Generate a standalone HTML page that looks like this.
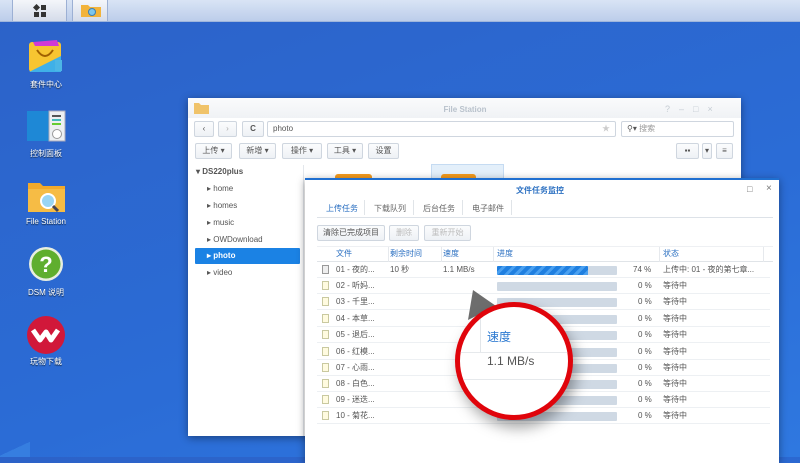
<!DOCTYPE html>
<html><head><meta charset="utf-8"><style>
*{margin:0;padding:0;box-sizing:border-box}
body{width:800px;height:457px;overflow:hidden;position:relative;font-family:"Liberation Sans","Noto Sans CJK SC",sans-serif;background:linear-gradient(160deg,#2c62c8 0%,#2b6cd6 60%,#2f78e0 100%);font-size:8px;color:#444}
.a{position:absolute}
.tb{left:0;top:0;width:800px;height:22px;background:linear-gradient(#d9e4f5,#bccdea);border-bottom:1px solid #9fb6dc}
.btn{position:absolute;top:0;height:21px;background:linear-gradient(#f4f6fa,#d5dcea);border-right:1px solid #9cb0d4;border-left:1px solid #9cb0d4}
.lbl{color:#fff;font-size:8px;text-align:center;width:80px;text-shadow:0 1px 1px #123}
.win{background:#fff;box-shadow:0 2px 8px rgba(0,0,0,.4)}
.b{position:absolute;border:1px solid #cfd6df;background:linear-gradient(#fbfcfd,#eef1f5);border-radius:2px;height:16px;font-size:8px;color:#555;line-height:14px;text-align:center}
.tree{position:absolute;left:207px;font-size:8px;color:#555}
.row{position:absolute;left:317px;width:453px;height:16px;border-bottom:1px solid #edf0f3;font-size:8px;color:#555;line-height:15px}
.row span{position:absolute}
.bar{position:absolute;left:180px;top:4px;width:120px;height:9px;background:#cfd9e4;border-radius:1px}
.ic{position:absolute;left:5px;top:3px;width:7px;height:9px;border:1px solid #c9c9a0;background:#fffbe0}
</style></head><body>
<div class="a tb"></div>
<div class="btn" style="left:12px;width:55px"><svg class="a" style="left:20px;top:4px" width="14" height="14"><rect x="1" y="1" width="5" height="5" fill="#333" transform="rotate(45 3.5 3.5)"/><rect x="8" y="1" width="5" height="5" fill="#333"/><rect x="1" y="8" width="5" height="5" fill="#333"/><rect x="8" y="8" width="5" height="5" fill="#333"/></svg></div>
<div class="btn" style="left:72px;width:36px"><svg class="a" style="left:7px;top:3px" width="22" height="15"><path d="M1 2h7l2 2h11v10H1z" fill="#f2b33a"/><circle cx="12" cy="9" r="3.5" fill="#7cc6ee" stroke="#3b7fb6"/></svg></div>

<svg class="a" style="left:27px;top:38px" width="38" height="38"><rect x="2" y="4" width="32" height="30" rx="3" fill="#f7c531"/><path d="M2 34 L34 18 V34Z" fill="#3fb0e8"/><path d="M6 4 L30 2 L32 8 L8 8Z" fill="#d13ad6"/><path d="M10 12 q8 12 16 0" stroke="#a06000" stroke-width="2" fill="none"/><rect x="28" y="22" width="7" height="11" fill="#4cb6e6"/></svg>
<div class="a lbl" style="left:6px;top:79px">套件中心</div>
<svg class="a" style="left:27px;top:110px" width="40" height="34"><rect x="0" y="1" width="23" height="30" fill="#1e88d6"/><rect x="22" y="1" width="16" height="30" fill="#eceff2" stroke="#aab"/><rect x="25" y="5" width="9" height="2" fill="#555"/><rect x="25" y="9" width="9" height="2" fill="#4bb"/><rect x="25" y="13" width="9" height="2" fill="#6c3"/><circle cx="30" cy="24" r="4.5" fill="#fff" stroke="#999"/></svg>
<div class="a lbl" style="left:6px;top:148px">控制面板</div>
<svg class="a" style="left:27px;top:180px" width="40" height="34"><path d="M1 3h12l3 3h22v26H1z" fill="#f2aa2b"/><rect x="1" y="9" width="37" height="23" fill="#f6bc45"/><circle cx="21" cy="21" r="7" fill="#9ad5f3" stroke="#fff" stroke-width="2"/><path d="M26 26l5 5" stroke="#445" stroke-width="3"/></svg>
<div class="a lbl" style="left:6px;top:217px">File Station</div>
<svg class="a" style="left:28px;top:246px" width="36" height="36"><circle cx="18" cy="18" r="17" fill="#e8eee0"/><circle cx="18" cy="18" r="14.5" fill="#5fae2e"/><text x="18" y="26" font-size="22" font-weight="bold" fill="#fff" text-anchor="middle" font-family="Liberation Sans">?</text></svg>
<div class="a lbl" style="left:6px;top:287px">DSM 说明</div>
<svg class="a" style="left:27px;top:316px" width="38" height="38"><circle cx="19" cy="19" r="19" fill="#d1183a"/><path d="M6 14 L13 24 L19 16 L24 24 L31 14" stroke="#fff" stroke-width="5" fill="none" stroke-linejoin="round"/></svg>
<div class="a lbl" style="left:6px;top:356px">玩物下载</div>
<div class="a" style="left:0;top:437px;width:30px;height:20px;background:linear-gradient(155deg,transparent 55%,#3a86e4 55%);opacity:.7"></div>

<div class="a win" style="left:188px;top:98px;width:553px;height:338px;background:#fff"></div>
<div class="a" style="left:188px;top:98px;width:553px;height:20px;background:linear-gradient(#fafbfc,#f0f2f5)"></div>
<svg class="a" style="left:194px;top:102px" width="15" height="12"><path d="M0 1h5l2 2h8v9H0z" fill="#f0c36a"/></svg>
<div class="a" style="left:420px;top:105px;width:90px;text-align:center;color:#b9c2cc;font-weight:bold;font-size:8px">File Station</div>
<div class="a" style="left:665px;top:104px;color:#c5ccd3;font-size:9px;letter-spacing:9px">?–□×</div>
<div class="b" style="left:194px;top:121px;width:20px;height:16px">‹</div>
<div class="b" style="left:218px;top:121px;width:19px;height:16px;color:#aaa">›</div>
<div class="b" style="left:242px;top:121px;width:22px;height:16px;font-weight:bold">C</div>
<div class="b" style="left:267px;top:121px;width:349px;height:16px;background:#fff;text-align:left;padding-left:5px">photo<span style="position:absolute;right:5px;color:#ccc">★</span></div>
<div class="b" style="left:621px;top:121px;width:113px;height:16px;background:#fff;text-align:left;padding-left:5px">⚲▾ <span style="color:#999">搜索</span></div>
<div class="b" style="left:195px;top:143px;width:37px;height:16px">上传 ▾</div>
<div class="b" style="left:239px;top:143px;width:37px">新增 ▾</div>
<div class="b" style="left:282px;top:143px;width:40px">操作 ▾</div>
<div class="b" style="left:327px;top:143px;width:36px">工具 ▾</div>
<div class="b" style="left:368px;top:143px;width:31px">设置</div>
<div class="b" style="left:676px;top:143px;width:23px">▪▪</div>
<div class="b" style="left:702px;top:143px;width:10px">▾</div>
<div class="b" style="left:716px;top:143px;width:17px">≡</div>
<div class="a" style="left:303px;top:165px;width:1px;height:271px;background:#e3e7ec"></div>
<div class="tree" style="left:196px;top:167px;font-weight:bold">▾ DS220plus</div>
<div class="tree" style="top:184px">▸ home</div>
<div class="tree" style="top:201px">▸ homes</div>
<div class="tree" style="top:218px">▸ music</div>
<div class="tree" style="top:235px">▸ OWDownload</div>
<div class="a" style="left:195px;top:248px;width:105px;height:16px;background:#1b82e4;border-radius:1px"></div>
<div class="tree" style="top:251px;color:#fff;font-weight:bold">▸ photo</div>
<div class="tree" style="top:268px">▸ video</div>
<div class="a" style="left:335px;top:174px;width:37px;height:6px;background:#f39a1d;border-radius:3px 3px 0 0"></div>
<div class="a" style="left:431px;top:164px;width:73px;height:16px;background:#e3effa;border:1px solid #c5dbf2"></div>
<div class="a" style="left:441px;top:174px;width:35px;height:6px;background:#f39a1d;border-radius:3px 3px 0 0"></div>

<div class="a win" style="left:305px;top:178px;width:474px;height:285px;border-top:2px solid #1f6fd0"></div>
<div class="a" style="left:480px;top:185px;width:120px;text-align:center;color:#2a6fc1;font-size:8px;font-weight:bold">文件任务监控</div>
<div class="a" style="left:747px;top:184px;color:#777;font-size:9px">□</div>
<div class="a" style="left:766px;top:183px;color:#777;font-size:10px">×</div>
<div class="a" style="left:317px;top:198px;width:456px;height:20px;border-bottom:1px solid #dde2e8"></div>
<div class="a" style="left:326px;top:203px;color:#2a6fc1;font-size:8px">上传任务</div>
<div class="a" style="left:374px;top:203px;color:#666">下载队列</div>
<div class="a" style="left:423px;top:203px;color:#666">后台任务</div>
<div class="a" style="left:472px;top:203px;color:#666">电子邮件</div>
<div class="a" style="left:364px;top:200px;width:1px;height:15px;background:#e0e4e8"></div>
<div class="a" style="left:413px;top:200px;width:1px;height:15px;background:#e0e4e8"></div>
<div class="a" style="left:462px;top:200px;width:1px;height:15px;background:#e0e4e8"></div>
<div class="a" style="left:511px;top:200px;width:1px;height:15px;background:#e0e4e8"></div>
<div class="b" style="left:317px;top:225px;width:68px;height:16px">清除已完成项目</div>
<div class="b" style="left:389px;top:225px;width:30px;color:#bbb">删除</div>
<div class="b" style="left:424px;top:225px;width:47px;color:#bbb">重新开始</div>
<div class="a" style="left:317px;top:246px;width:456px;height:16px;border-bottom:1px solid #e0e4e8;border-top:1px solid #eef0f3;color:#2a6fc1;line-height:14px">
<span class="a" style="left:19px">文件</span><span class="a" style="left:73px">剩余时间</span><span class="a" style="left:126px">速度</span><span class="a" style="left:180px">进度</span><span class="a" style="left:346px">状态</span>
<span class="a" style="left:71px;top:0;width:1px;height:15px;background:#e6e9ed"></span><span class="a" style="left:124px;top:0;width:1px;height:15px;background:#e6e9ed"></span><span class="a" style="left:176px;top:0;width:1px;height:15px;background:#e6e9ed"></span><span class="a" style="left:342px;top:0;width:1px;height:15px;background:#e6e9ed"></span><span class="a" style="left:446px;top:0;width:1px;height:15px;background:#e6e9ed"></span></div>

<div class="row" style="top:262px"><span class="ic" style="border-color:#999;background:#eee"></span><span style="left:19px">01 - 夜的...</span><span style="left:73px">10 秒</span><span style="left:126px">1.1 MB/s</span><div class="bar"><div style="width:91px;height:9px;background:repeating-linear-gradient(135deg,#1f7fe0 0 4px,#4aa0f0 4px 7px);border-radius:1px"></div></div><span style="left:316px">74 %</span><span style="left:346px">上传中: 01 - 夜的第七章...</span></div>
<div class="row" style="top:278px"><span class="ic"></span><span style="left:19px">02 - 听妈...</span><div class="bar"></div><span style="left:321px">0 %</span><span style="left:346px">等待中</span></div>
<div class="row" style="top:294px"><span class="ic"></span><span style="left:19px">03 - 千里...</span><div class="bar"></div><span style="left:321px">0 %</span><span style="left:346px">等待中</span></div>
<div class="row" style="top:311px"><span class="ic"></span><span style="left:19px">04 - 本草...</span><div class="bar"></div><span style="left:321px">0 %</span><span style="left:346px">等待中</span></div>
<div class="row" style="top:327px"><span class="ic"></span><span style="left:19px">05 - 退后...</span><div class="bar"></div><span style="left:321px">0 %</span><span style="left:346px">等待中</span></div>
<div class="row" style="top:344px"><span class="ic"></span><span style="left:19px">06 - 红模...</span><div class="bar"></div><span style="left:321px">0 %</span><span style="left:346px">等待中</span></div>
<div class="row" style="top:360px"><span class="ic"></span><span style="left:19px">07 - 心雨...</span><div class="bar"></div><span style="left:321px">0 %</span><span style="left:346px">等待中</span></div>
<div class="row" style="top:376px"><span class="ic"></span><span style="left:19px">08 - 白色...</span><div class="bar"></div><span style="left:321px">0 %</span><span style="left:346px">等待中</span></div>
<div class="row" style="top:392px"><span class="ic"></span><span style="left:19px">09 - 迷迭...</span><div class="bar"></div><span style="left:321px">0 %</span><span style="left:346px">等待中</span></div>
<div class="row" style="top:408px"><span class="ic"></span><span style="left:19px">10 - 菊花...</span><div class="bar"></div><span style="left:321px">0 %</span><span style="left:346px">等待中</span></div>

<svg class="a" style="left:468px;top:286px" width="30" height="40"><path d="M5 4 L28 20 L0 34Z" fill="#6d6d6d"/></svg>
<div class="a" style="left:455px;top:302px;width:118px;height:118px;border-radius:50%;border:5px solid #e0040b;background:#fff;overflow:hidden;box-shadow:4px 8px 14px rgba(0,0,0,.35)">
<div class="a" style="left:20px;top:0;width:1px;height:45px;background:#e2e6ea"></div>
<div class="a" style="left:0;top:45px;width:120px;height:1px;background:#e6e9ec"></div>
<div class="a" style="left:0;top:72px;width:120px;height:1px;background:#e6e9ec"></div>
<div class="a" style="left:27px;top:21px;color:#2a78d0;font-size:12px">速度</div>
<div class="a" style="left:27px;top:47px;color:#555;font-size:12px">1.1 MB/s</div>
</div>
</body></html>
